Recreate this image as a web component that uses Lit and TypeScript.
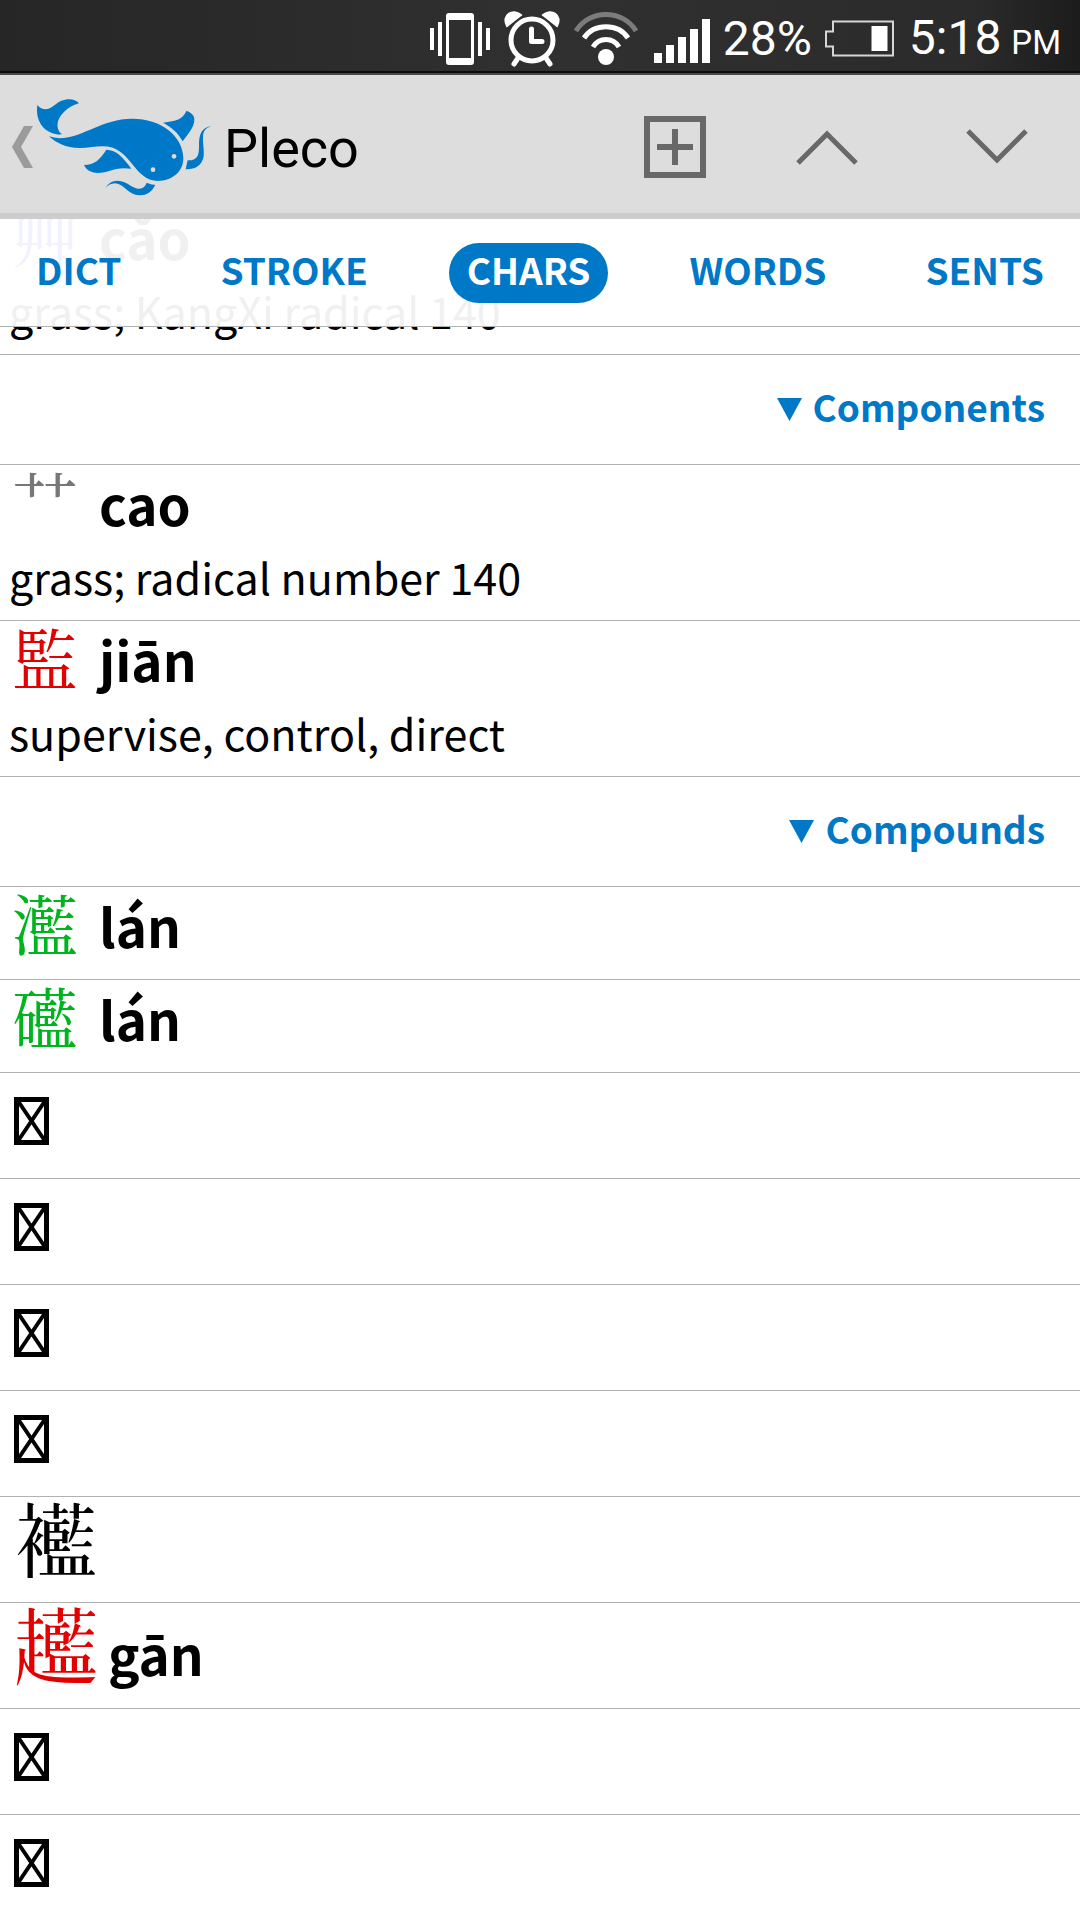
import { LitElement, html, css, svg, nothing } from "lit";

interface Entry {
  hanzi?: string;
  tone?: string;
  pinyin?: string;
  gloss?: string;
  large?: boolean;
}

const radical: Entry[] = [{ hanzi: "艸", tone: "third", pinyin: "cǎo", gloss: "grass; KangXi radical 140" }];

const components: Entry[] = [
  { hanzi: "艹", tone: "neutral", pinyin: "cao", gloss: "grass; radical number 140" },
  { hanzi: "監", tone: "first", pinyin: "jiān", gloss: "supervise, control, direct" },
];

const compounds: Entry[] = [
  { hanzi: "灆", tone: "second", pinyin: "lán" },
  { hanzi: "礷", tone: "second", pinyin: "lán" },
  { large: true },
  { large: true },
  { large: true },
  { large: true },
  { hanzi: "\u{277CB}", large: true },
  { hanzi: "\u{27FB2}", tone: "first", pinyin: "gān", large: true },
  { large: true },
  { large: true },
];

const tabs = ["DICT", "STROKE", "CHARS", "WORDS", "SENTS"];

const statusIcons = html`
  <svg class="status-icon" width="62" height="54" viewBox="430 11 62 54" fill="#fff">
    <path d="M431 27h4v22h-4zM439 21h4v34h-4zM479 21h4v34h-4zM487 27h4v22h-4z" />
    <path fill-rule="evenodd" d="M450 12h22q3 0 3 3v46q0 3-3 3h-22q-3 0-3-3v-46q0-3 3-3zM450 19v38h22v-38z" />
  </svg>
  <svg class="status-icon" width="56" height="56" viewBox="505 10 56 56" fill="none" stroke="#fff">
    <path d="M508 25C502 14 514 7 522 14Z M558 25C564 14 552 7 544 14Z" fill="#fff" stroke="#fff" stroke-width="2" />
    <circle cx="533" cy="39" r="21" stroke-width="5" />
    <path d="M532.500 28V40.500H543" stroke-width="5" stroke-linecap="round" stroke-linejoin="round" />
    <path d="M519 57L515 63M547 57L551 63" stroke-width="5" stroke-linecap="round" />
  </svg>
  <svg class="status-icon wifi" width="66" height="54" viewBox="573 11 66 54" fill="none" stroke="#fff" stroke-width="5">
    <path d="M576 30C589 8 623 8 636 30" stroke="#7c7c7c" />
    <path d="M584 37C594 22 618 22 628 37" />
    <path d="M593 46C599 36 613 36 619 46" />
    <circle cx="606" cy="56" r="8" fill="#fff" stroke="none" />
  </svg>
  <svg class="signal" width="56" height="44" viewBox="654 18 56 44" fill="#fff">
    <path d="M654 52h8v10h-8zM666 44h8v18h-8zM678 36h8v26h-8zM690 28h8v34h-8zM702 18h8v44h-8z" />
  </svg>
`;

const logo = svg`
  <svg class="logo" width="180" height="100" viewBox="105 50 540 300" fill="#0078c8">
    <path d="M112 74Q123 87 137 87C162 86 170 57 208 57Q226 57 237 69C196 80 165 117 174 145Q177 157 186 162C142 165 104 130 112 74Z" />
    <path d="M147 168Q165 175 190 173C250 168 310 116 395 115C480 114 549 165 550 234C550 275 515 302 474 302C440 302 420 280 402 258C372 220 350 198 308 198C285 198 265 203 240 203C195 203 170 188 147 168Z" />
    <path d="M489 127C530 122 547 118 559 92Q572 94 581 108C590 130 568 158 548 183C535 158 515 141 489 127Z" />
    <path d="M636 137C616 143 609 152 609 172C608 190 613 205 611 228C606 258 583 268 557 267L563 240C590 241 597 228 597 200C596 160 605 142 636 137Z" />
    <path d="M319 208C350 209 368 230 394 265C370 262 350 263 325 273C290 283 262 277 252 254C285 252 298 240 319 208Z" />
    <path d="M316 323Q328 302 352 301C385 303 395 325 418 325Q435 323 440 307Q452 312 466 314Q450 346 418 345C385 345 375 312 345 309Q328 310 316 323Z" />
    <circle cx="522" cy="228" r="7" fill="#ddd" />
    <circle cx="459" cy="268" r="7" fill="#ddd" />
  </svg>`;

class AppRoot extends LitElement {
  static properties = { active: { state: true } };
  declare active: string;

  constructor() {
    super();
    this.active = "CHARS";
  }

  static styles = css`
    :host {
      display: block;
      min-height: 100vh;
      background: #fff;
      color: #000;
      font-family: "Noto Sans CJK SC", "Noto Sans", sans-serif;
    }
    svg { display: block; flex: none; }
    button {
      margin: 0;
      padding: 0;
      border: 0;
      background: none;
      font: inherit;
      color: inherit;
    }
    .screen { display: flex; flex-direction: column; height: 100vh; overflow: hidden; }
    .status {
      flex: none;
      display: flex;
      justify-content: flex-end;
      align-items: center;
      box-sizing: border-box;
      height: 75px;
      padding: 4px 19px 0 0;
      border-bottom: 2px solid #4a4a4a;
      box-shadow: inset 0 -2px #0c0c0c;
      background: linear-gradient(90deg, #262626, #303030 50%, #2b2b2b 90%, #1c1c1c);
      color: #fff;
      font: 400 48px/58px Roboto, sans-serif;
    }
    .status-icon { margin-right: 13px; }
    .wifi { margin-right: 15px; }
    .signal { margin: 4px 13px 0 0; }
    .battery { margin: 0 15px 0 13px; }
    .meridiem { margin-left: 10px; font-size: 33px; }
    .clock { display: flex; align-items: baseline; padding-top: 4px; }
    .bar {
      flex: none;
      display: flex;
      align-items: center;
      height: 132px;
      padding: 6px 7px 0 12px;
      border-bottom: 6px solid #cdcdcd;
      background: #ddd;
    }
    .home { display: flex; align-items: center; gap: 2px; }
    .title { margin: 0 auto 0 9px; padding-top: 4px; font: 400 54px/64px Roboto, sans-serif; }
    .action { display: flex; justify-content: center; width: 152px; }
    .action:last-child { margin-left: 18px; }
    .main { position: relative; flex: 1; overflow: hidden; }
    .tabs {
      position: absolute;
      inset: 0 0 auto 0;
      display: flex;
      justify-content: space-between;
      align-items: center;
      height: 107px;
      padding: 0 18px;
      border-bottom: 1px solid #b2b2b2;
      background: rgba(255, 255, 255, 0.94);
      color: #0078c8;
      font-weight: 700;
      font-size: 37px;
      line-height: 52px;
    }
    .tab { padding: 0 18px 8px; border-radius: 30px; }
    .tab.on { background: #0078c8; color: #fff; }
    .list { margin-top: -20px; }
    .rows { margin: 0; padding: 0; list-style: none; }
    .row { padding: 0 9px 18px; border-bottom: 1px solid #b2b2b2; }
    .row.defined { padding-bottom: 7px; }
    .row.large { padding-bottom: 9px; }
    .head { display: flex; align-items: flex-start; gap: 21px; height: 74px; padding-left: 3px; }
    .large .head { gap: 10px; height: 96px; padding-left: 5px; }
    .hanzi { font-family: "Noto Serif CJK TC", "Noto Sans CJK TC", serif; font-size: 66px; line-height: 70px; }
    .large .hanzi { font-size: 84px; line-height: 80px; }
    .pinyin { font-weight: 700; font-size: 53px; line-height: 76px; }
    .large .pinyin { line-height: 100px; }
    .gloss { margin: 0; font-size: 43px; line-height: 74px; }
    .missing { align-self: flex-end; padding-bottom: 24px; }
    .first { color: #e30000; }
    .second { color: #00b41e; }
    .third { color: #1414ff; }
    .neutral { color: #777; }
    .section {
      display: flex;
      justify-content: flex-end;
      align-items: center;
      gap: 11px;
      width: 100%;
      height: 110px;
      padding: 0 35px 8px 0;
      border-bottom: 1px solid #b2b2b2;
      color: #0078c8;
      font-weight: 700;
      font-size: 37px;
    }
    .marker { margin-top: 8px; }
  `;

  row(e: Entry) {
    const kind = e.gloss ? "defined" : e.large ? "large" : "";
    return html`<li class="row ${kind}">
      <div class="head">
        ${e.hanzi
          ? html`<span class="hanzi ${e.tone ?? ""}" lang="zh-Hant">${e.hanzi}</span>`
          : html`<svg class="missing" width="35" height="48" viewBox="0 0 35 48" fill="none" stroke="#000">
              <path d="M2.500 2.500H32.500V45.500H2.500Z" stroke-width="5" />
              <path d="M4 4L31 44M31 4L4 44" stroke-width="4" />
            </svg>`}
        ${e.pinyin ? html`<span class="pinyin">${e.pinyin}</span>` : nothing}
      </div>
      ${e.gloss ? html`<p class="gloss">${e.gloss}</p>` : nothing}
    </li>`;
  }

  section(name: string) {
    return html`<button class="section">
      <svg class="marker" width="25" height="23" viewBox="0 0 25 23" fill="#0078c8"><path d="M0 0H25L12.500 23Z" /></svg>
      <span>${name}</span>
    </button>`;
  }

  render() {
    return html`<div class="screen">
      <div class="status">
        ${statusIcons}
        <span>28%</span>
        <svg class="battery" width="69" height="37" viewBox="824.500 19 69 37">
          <path d="M832.500 20.500H892.500V54.500H832.500V45.500H825.500V30.500H832.500Z" fill="none" stroke="#d8d4d4" stroke-width="2" />
          <path d="M871 25h16v25h-16z" fill="#fff" />
        </svg>
        <div class="clock"><span>5:18</span><span class="meridiem">PM</span></div>
      </div>
      <header class="bar">
        <button class="home" aria-label="Back">
          <svg width="21" height="42" viewBox="0 0 21 42" fill="#9b9b9b"><path d="M12 0H21L9 21L21 42H12L0 21Z" /></svg>
          ${logo}
        </button>
        <h1 class="title">Pleco</h1>
        <button class="action" aria-label="Add">
          <svg width="62" height="62" viewBox="0 0 62 62" fill="none" stroke="#686868" stroke-width="6">
            <path d="M3 3H59V59H3ZM31 13V49M13 31H49" />
          </svg>
        </button>
        <button class="action" aria-label="Previous">
          <svg width="62" height="62" viewBox="0 0 62 62" fill="none" stroke="#686868" stroke-width="5"><path d="M2 47L31 18L60 47" /></svg>
        </button>
        <button class="action" aria-label="Next">
          <svg width="62" height="62" viewBox="0 0 62 62" fill="none" stroke="#686868" stroke-width="5"><path d="M2 15L31 44L60 15" /></svg>
        </button>
      </header>
      <main class="main">
        <div class="list">
          <ul class="rows">${radical.map((e) => this.row(e))}</ul>
          ${this.section("Components")}
          <ul class="rows">${components.map((e) => this.row(e))}</ul>
          ${this.section("Compounds")}
          <ul class="rows">${compounds.map((e) => this.row(e))}</ul>
        </div>
        <nav class="tabs">
          ${tabs.map(
            (t) => html`<button class="tab ${t === this.active ? "on" : ""}" @click=${() => (this.active = t)}>${t}</button>`,
          )}
        </nav>
      </main>
    </div>`;
  }
}
customElements.define("app-root", AppRoot);
